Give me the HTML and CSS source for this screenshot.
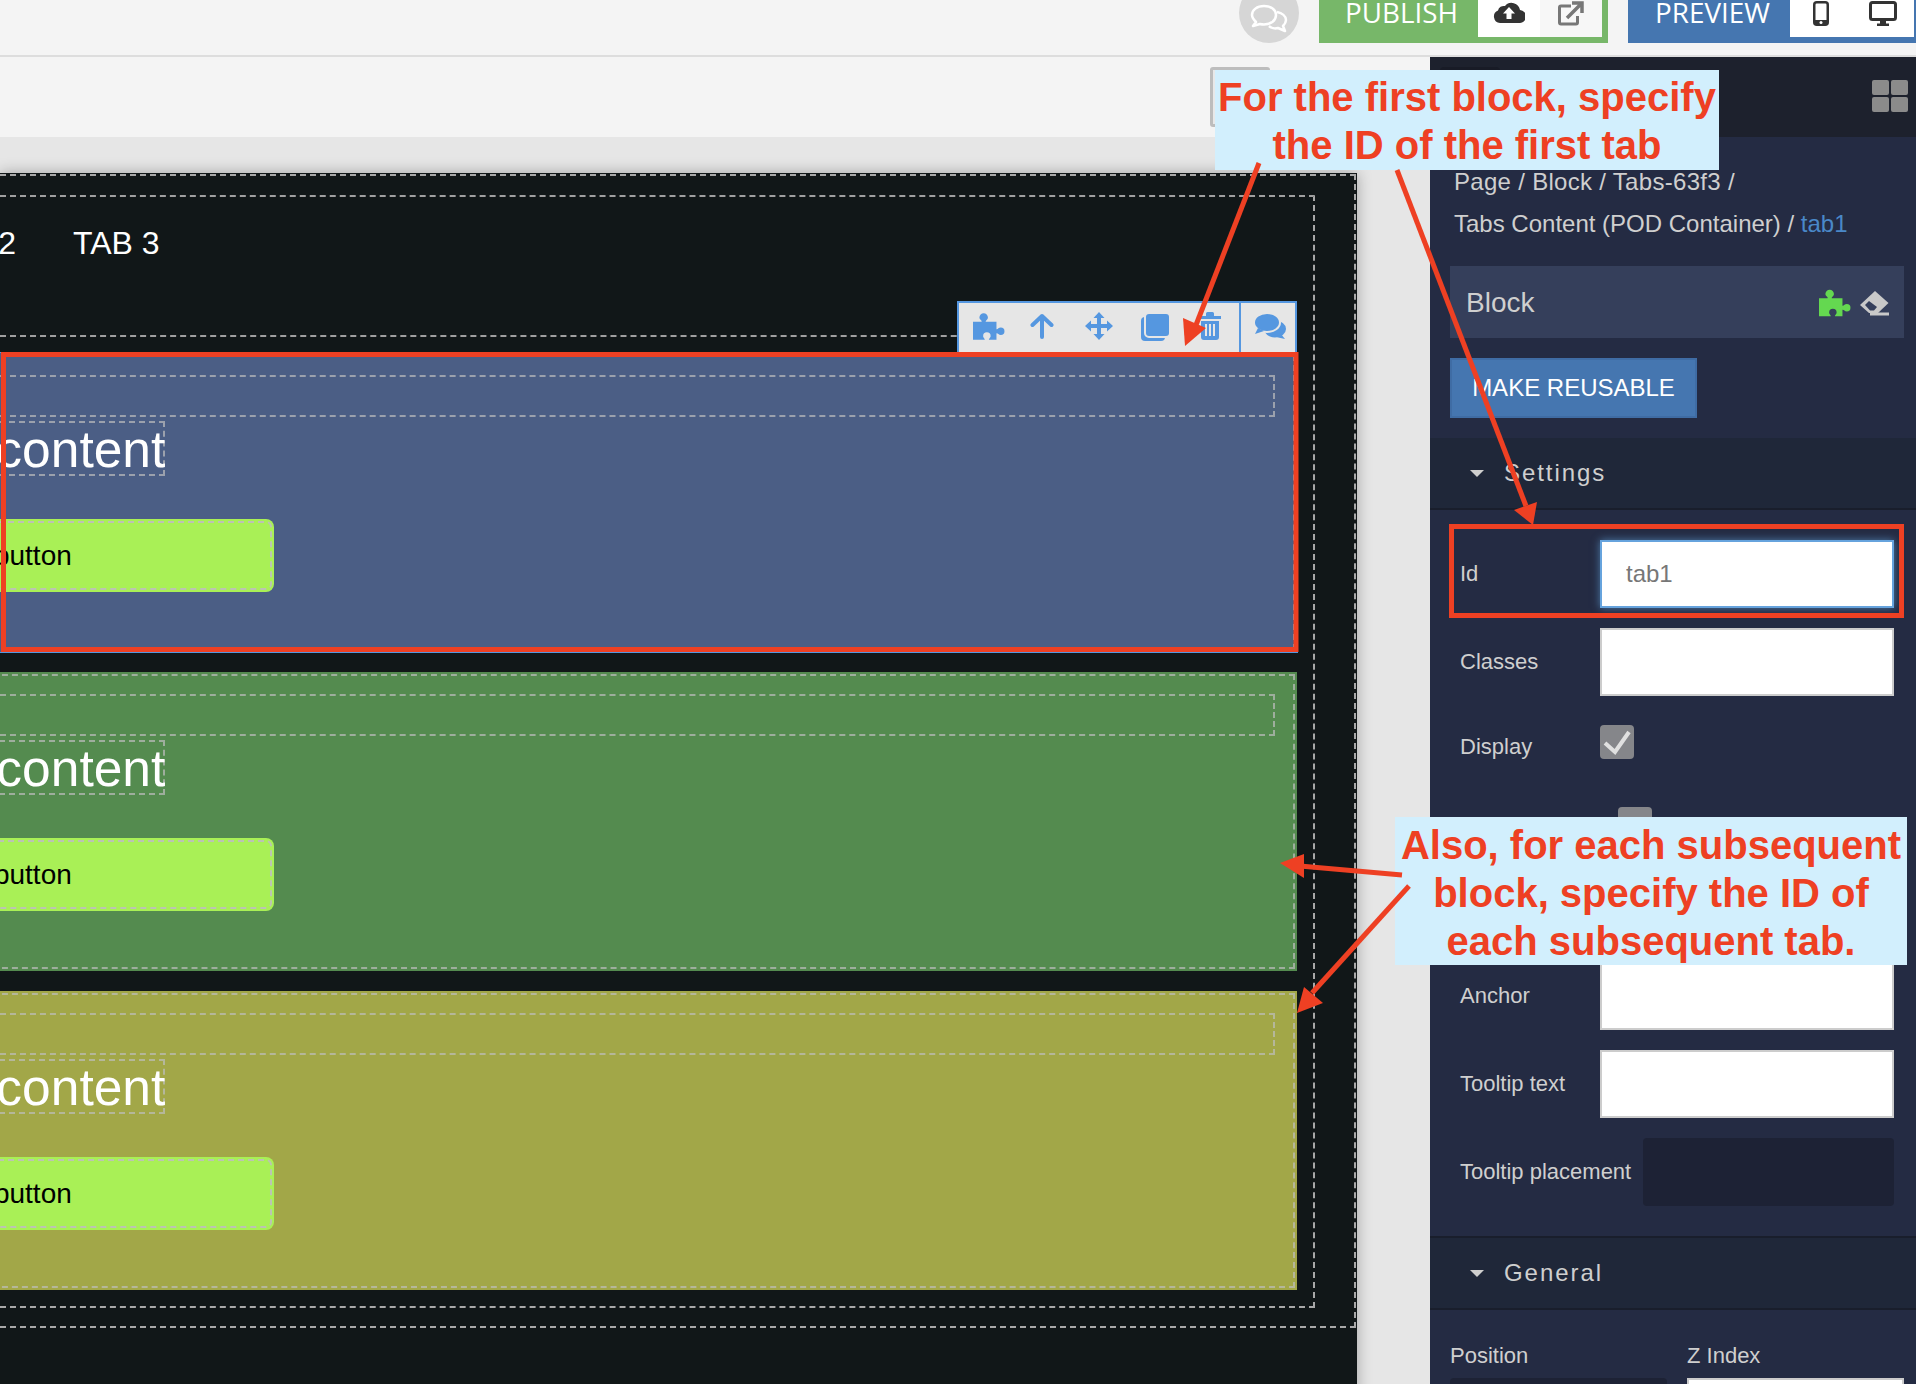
FILE: index.html
```html
<!DOCTYPE html>
<html lang="en">
<head>
    <meta charset="UTF-8">
    <meta name="viewport" content="width=device-width, initial-scale=1.0">
    <title>Page Editor</title>
    <link rel="stylesheet" href="styles.css">
</head>
<body>

    <!-- Top bar, scrolled so its top edge is cut off -->
    <header class="topbar">
        <div class="chat-circle">
            <svg width="38" height="30" viewBox="0 0 38 30" fill="none" stroke="#fff" stroke-width="2.5" stroke-linejoin="round">
                <path d="M14 2c-7 0-12 4-12 9 0 3 2 5 4 7l-3 4 7-2c2 .5 3 .5 4 .5 7 0 12-4 12-9.500S21 2 14 2z"/>
                <path d="M27 8c5 1 9 4 9 8 0 2-1 4-3 6l2 5-7-3c-3 1-7 0-9-2"/>
            </svg>
        </div>
        <div class="top-btn green">
            <span class="top-label">PUBLISH</span>
            <div class="top-icons">
                <div class="top-icon">
                    <svg width="32" height="22" viewBox="0 0 32 22">
                        <path fill="#333" d="M7 22A6.500 6.500 0 0 1 5 9.500 6 6 0 0 1 12 5 8.500 8.500 0 0 1 27 9a6.500 6.500 0 0 1-1 13z"/>
                        <path fill="#fff" d="M16 6l6 6.500h-3.500V18h-5v-5.500H10z"/>
                    </svg>
                </div>
                <div class="top-icon alt">
                    <svg width="26" height="25" viewBox="0 0 26 25" fill="none" stroke="#777" stroke-width="3">
                        <path d="M13 5H3a1.500 1.500 0 0 0-1.500 1.500v15A1.500 1.500 0 0 0 3 23h15a1.500 1.500 0 0 0 1.500-1.500V15"/>
                        <path d="M9 17L23 3M14 2h10v10" stroke-width="3.500"/>
                    </svg>
                </div>
            </div>
        </div>
        <div class="top-btn blue">
            <span class="top-label">PREVIEW</span>
            <div class="top-icons">
                <div class="top-icon">
                    <svg width="16" height="25" viewBox="0 0 16 25">
                        <rect x="1.250" y="1.250" width="13.500" height="22.500" rx="2.500" fill="none" stroke="#333" stroke-width="2.500"/>
                        <rect x="1" y="19" width="14" height="5" fill="#333"/>
                        <circle cx="8" cy="21.500" r="1.500" fill="#fff"/>
                    </svg>
                </div>
                <div class="top-icon">
                    <svg width="28" height="25" viewBox="0 0 28 25">
                        <rect x="1.500" y="1.500" width="25" height="17" rx="2" fill="none" stroke="#333" stroke-width="3"/>
                        <path fill="#333" d="M11 20h6v2.500h3V25H8v-2.500h3z"/>
                    </svg>
                </div>
            </div>
        </div>
    </header>

    <div class="workspace">
        <main class="editor">
            <div class="subbar">
                <div class="subbar-box"></div>
            </div>

            <div class="stage">
                <div class="canvas">
                    <div class="frame-outer">
                        <div class="frame-inner">
                            <div class="tabs">
                                <span>TAB 1</span>
                                <span>TAB 2</span>
                                <span>TAB 3</span>
                            </div>
                            <div class="tab-content">

                                <section class="block blue-block">
                                    <div class="block-toolbar">
                                        <div class="tools">
                                            <svg class="tool-add" width="32" height="27" viewBox="0 0 30 25"><path fill="#5597e0" d="M0 8h8c1-1-2-2-2-4a4 4 0 0 1 8 0c0 2-2.500 3-2 4h10v7c1 .5 2-1.500 4-1.500a3.500 3.500 0 0 1 0 7c-2 0-3-2-4-1.500v6h-7c-.5-1 1.500-1.500 1.500-3.500a3.500 3.500 0 0 0-7 0c0 2 2 2.500 1.500 3.500H0z"/></svg>
                                            <svg class="tool-up" width="24" height="26" viewBox="0 0 24 26" fill="none" stroke="#5597e0" stroke-width="4" stroke-linecap="round" stroke-linejoin="round"><path d="M12 24V3M2.500 12L12 3l9.500 9"/></svg>
                                            <svg width="28" height="28" viewBox="0 0 28 28" fill="#5597e0"><path d="M14 0l5.500 6H16v6h6V8.500l6 5.500-6 5.500V16h-6v6h3.500L14 28l-5.500-6H12v-6H6v3.500L0 14l6-5.500V12h6V6H8.500z"/></svg>
                                            <svg width="30" height="29" viewBox="0 0 30 29"><rect x="0" y="5" width="24" height="24" rx="4" fill="#5597e0"/><rect x="4" y="1" width="25" height="24" rx="4" fill="#5597e0" stroke="#e6e6e6" stroke-width="2"/></svg>
                                            <svg width="22" height="28" viewBox="0 0 22 28" fill="#5597e0"><path d="M0 4h7V1.500A1.500 1.500 0 0 1 8.500 0h5A1.500 1.500 0 0 1 15 1.500V4h7v3H0z"/><path d="M2 9h18v16a3 3 0 0 1-3 3H5a3 3 0 0 1-3-3zM6 12v12h2V12zm4 0v12h2V12zm4 0v12h2V12z" fill-rule="evenodd"/></svg>
                                        </div>
                                        <div class="tool-chat">
                                            <svg width="32" height="26" viewBox="0 0 32 26"><ellipse cx="21" cy="16" rx="11" ry="8.500" fill="#5597e0"/><path d="M27 21l4 5-9-2z" fill="#5597e0"/><ellipse cx="13" cy="9.500" rx="13" ry="9.500" fill="#5597e0" stroke="#e6e6e6" stroke-width="2"/><path d="M4 15l-3 6 9-3z" fill="#5597e0"/></svg>
                                        </div>
                                    </div>
                                    <div class="block-row"></div>
                                    <h2 class="block-title">Tab content</h2>
                                    <div class="block-btn">Tab button</div>
                                </section>

                                <section class="block green-block">
                                    <div class="block-row"></div>
                                    <h2 class="block-title">Tab content</h2>
                                    <div class="block-btn">Tab button</div>
                                </section>

                                <section class="block olive-block">
                                    <div class="block-row"></div>
                                    <h2 class="block-title">Tab content</h2>
                                    <div class="block-btn">Tab button</div>
                                </section>

                            </div>
                        </div>
                    </div>
                </div>
            </div>
        </main>

        <aside class="panel">
            <div class="panel-head">
                <div class="panel-tab"></div>
                <div class="grid-icon"><i></i><i></i><i></i><i></i></div>
            </div>

            <div class="panel-top">
                <p class="crumbs">Page / Block / Tabs-63f3 /<br>Tabs Content (POD Container) / <span class="crumb-link">tab1</span></p>

                <div class="block-bar">
                    <span>Block</span>
                    <div class="block-bar-icons">
                        <svg width="32" height="28" viewBox="0 0 30 25"><path fill="#64d850" d="M0 8h8c1-1-2-2-2-4a4 4 0 0 1 8 0c0 2-2.500 3-2 4h10v7c1 .5 2-1.500 4-1.500a3.500 3.500 0 0 1 0 7c-2 0-3-2-4-1.500v6h-7c-.5-1 1.500-1.500 1.500-3.500a3.500 3.500 0 0 0-7 0c0 2 2 2.500 1.500 3.500H0z"/></svg>
                        <svg width="29" height="25" viewBox="0 0 29 25"><path fill="#c9c9c9" d="M15 0l13.500 12L18 22H9L0 14z"/><path fill="#353f5b" d="M5 14l4-4 8 6-3 3.500h-4z"/><rect x="10" y="21.500" width="19" height="3" fill="#c9c9c9"/></svg>
                    </div>
                </div>

                <button class="reusable-btn">MAKE REUSABLE</button>
            </div>

            <div class="section-head">
                <span class="caret"></span>
                <span>Settings</span>
            </div>

            <div class="fields">
                <div class="field">
                    <label>Id</label>
                    <input class="text-input focused" type="text" value="tab1">
                </div>
                <div class="field">
                    <label>Classes</label>
                    <input class="text-input" type="text">
                </div>
                <div class="field check-field">
                    <label>Display</label>
                    <div class="checkbox">
                        <svg width="34" height="34" viewBox="0 0 34 34" fill="none" stroke="#e0e0e0" stroke-width="4"><path d="M5 18l10 9L29 7"/></svg>
                    </div>
                </div>
                <div class="field second-check">
                    <div class="checkbox"></div>
                </div>
                <div class="field">
                    <label>Anchor</label>
                    <input class="text-input" type="text">
                </div>
                <div class="field">
                    <label>Tooltip text</label>
                    <input class="text-input" type="text">
                </div>
                <div class="field placement-field">
                    <label>Tooltip placement</label>
                    <div class="dark-select"></div>
                </div>
            </div>

            <div class="section-head general-head">
                <span class="caret"></span>
                <span>General</span>
            </div>

            <div class="two-col">
                <div>
                    <label>Position</label>
                    <div class="dark-select"></div>
                </div>
                <div>
                    <label>Z Index</label>
                    <input class="text-input" type="text">
                </div>
            </div>
        </aside>
    </div>

    <!-- Annotations drawn on top of the screenshot -->
    <div class="callout callout-first">For the first block, specify<br>the ID of the first tab</div>
    <div class="callout callout-next">Also, for each subsequent<br>block, specify the ID of<br>each subsequent tab.</div>
    <svg class="marks" width="1916" height="1384" viewBox="0 0 1916 1384">
        <g fill="none" stroke="#ee4023" stroke-width="5">
            <rect x="3.500" y="354.500" width="1292.500" height="295"/>
            <rect x="1451.500" y="526.500" width="450" height="89"/>
            <path d="M1259 163L1196 325"/>
            <path d="M1397 170L1526 506"/>
            <path d="M1402 875L1300 866"/>
            <path d="M1409 886L1312 993"/>
        </g>
        <g fill="#ee4023">
            <polygon points="1183,318 1206,328 1185,346"/>
            <polygon points="1514,510 1537,502 1533,525"/>
            <polygon points="1280,863 1304,854 1304,878"/>
            <polygon points="1297,1013 1304,987 1323,1003"/>
        </g>
    </svg>

</body>
</html>
```

FILE: styles.css
```css
html, body {
    margin: 0;
    padding: 0;
    width: 1916px;
    height: 1384px;
    overflow: hidden;
    background: #f4f4f4;
    font-family: "Liberation Sans", Arial, sans-serif;
}
.topbar {
    height: 55px;
    border-bottom: 2px solid #dddddd;
    background: #f4f4f4;
    display: flex;
    justify-content: flex-end;
    gap: 20px;
    overflow: hidden;
}
.chat-circle {
    width: 60px;
    height: 60px;
    margin-top: -17px;
    border-radius: 50%;
    background: #d6d6d6;
    display: flex;
    align-items: center;
    justify-content: center;
    padding-top: 12px;
    box-sizing: border-box;
}
.top-btn {
    height: 43px;
    display: flex;
    color: #fff;
}
.green {
    width: 289px;
    background: #77b769;
}
.blue {
    width: 288px;
    background: #4576b0;
}
.top-label {
    font-family: "Open Sans", sans-serif;
    font-size: 27.8px;
    line-height: 25px;
    width: 159px;
    box-sizing: border-box;
    padding-left: 6px;
    text-align: center;
}
.blue .top-label {
    width: 162px;
    padding-left: 7px;
}
.top-icons {
    display: flex;
    height: 37px;
}
.top-icon {
    width: 62px;
    background: #fff;
    display: flex;
    justify-content: center;
    padding-top: 1px;
    box-sizing: border-box;
}
.top-icon.alt {
    background: #f7f7f7;
}
.workspace {
    display: grid;
    grid-template-columns: 1430px 486px;
    height: 1327px;
}
.subbar {
    height: 80px;
    background: #f4f4f4;
    box-sizing: border-box;
    padding: 10px 160px 0 0;
    display: flex;
    justify-content: flex-end;
}
.subbar-box {
    width: 60px;
    height: 60px;
    box-sizing: border-box;
    border: 3px solid #bdbdbd;
    border-radius: 3px;
    background: #e8e8e8;
}
.stage {
    height: 1247px;
    box-sizing: border-box;
    padding-top: 36px;
    background: #e6e6e6;
    overflow: hidden;
}
.canvas {
    width: 1357px;
    height: 1300px;
    background: #111718;
    padding-top: 1px;
    box-sizing: border-box;
    box-shadow: 0 0 14px rgba(0, 0, 0, 0.3);
}
.frame-outer {
    width: 1356px;
    box-sizing: border-box;
    border-top: 2px dashed #a8a8a8;
    border-right: 2px dashed #a8a8a8;
    border-bottom: 2px dashed #a8a8a8;
    padding: 19px 39px 18px 0;
}
.frame-inner {
    border-top: 2px dashed #a0a0a0;
    border-right: 2px dashed #a8a8a8;
    border-bottom: 2px dashed #a8a8a8;
    padding-right: 16px;
}
.tabs {
    height: 138px;
    box-sizing: border-box;
    padding-top: 26px;
    margin-left: -214px;
    display: flex;
    gap: 57px;
    color: #fff;
    font-size: 32px;
    line-height: 40px;
}
.tab-content {
    border-top: 2px dashed #a0a0a0;
    padding: 16px 0;
    display: flex;
    flex-direction: column;
    gap: 20px;
}
.block {
    position: relative;
    height: 299px;
    box-sizing: border-box;
    margin-left: -20px;
    padding-top: 22px;
    outline: 2px dashed rgba(190, 190, 190, 0.7);
    outline-offset: -4px;
}
.blue-block {
    background: #4b5e85;
    box-shadow: 0 0 0 1px #5597e0;
}
.green-block {
    background: #548b4f;
}
.olive-block {
    background: #a2a748;
}
.block-toolbar {
    position: absolute;
    right: 0;
    bottom: 100%;
    width: 340px;
    height: 52px;
    box-sizing: border-box;
    background: #e6e6e6;
    border: 2px solid #5597e0;
    border-bottom: none;
    display: flex;
    justify-content: space-between;
}
.tools {
    display: flex;
    align-items: center;
    gap: 28px;
    padding: 0 0 4px 14px;
}
.tool-up {
    margin: 0 3px 0 -3px;
}
.tool-chat {
    width: 56px;
    padding: 0 0 4px 3px;
    box-sizing: border-box;
    border-left: 2px solid #5597e0;
    display: flex;
    align-items: center;
    justify-content: center;
}
.block-row {
    height: 42px;
    box-sizing: border-box;
    margin-right: 22px;
    border: 2px dashed rgba(190, 190, 190, 0.7);
}
.block-title {
    width: 266px;
    height: 55px;
    box-sizing: border-box;
    margin: 4px 0 0 -81px;
    padding-top: 1px;
    border: 2px dashed rgba(190, 190, 190, 0.7);
    color: #fff;
    font-size: 51.5px;
    font-weight: normal;
    line-height: 51px;
    text-indent: -2px;
    white-space: nowrap;
}
.block-btn {
    width: 374px;
    height: 73px;
    box-sizing: border-box;
    margin: 43px 0 0 -80px;
    padding-left: 41px;
    background: #a9f056;
    border-radius: 8px;
    outline: 2px dashed rgba(190, 190, 190, 0.9);
    outline-offset: -4px;
    color: #000;
    font-size: 28px;
    line-height: 73px;
}
.panel {
    background: #242b43;
    height: 1327px;
    overflow: hidden;
    color: #cfcfcf;
}
.panel-head {
    height: 80px;
    background: #1d212d;
    box-sizing: border-box;
    padding: 10px 8px 0 10px;
    display: flex;
    justify-content: space-between;
}
.panel-tab {
    width: 60px;
    height: 40px;
    background: #181b26;
    border-radius: 4px;
}
.grid-icon {
    width: 36px;
    height: 32px;
    margin-top: 13px;
    display: grid;
    grid-template-columns: 17px 17px;
    grid-template-rows: 15px 15px;
    gap: 2px;
}
.grid-icon i {
    background: #8b8b8b;
    border-radius: 2px;
}
.panel-top {
    padding: 24px 12px 20px 20px;
}
.crumbs {
    margin: 0 0 21px 4px;
    font-size: 24px;
    line-height: 42px;
}
.crumbs::first-line {
    letter-spacing: 0.3px;
}
.crumb-link {
    color: #4a88c8;
}
.block-bar {
    height: 72px;
    background: #353f5b;
    box-sizing: border-box;
    padding: 2px 15px 0 16px;
    display: flex;
    align-items: center;
    justify-content: space-between;
    font-size: 28px;
}
.block-bar-icons {
    display: flex;
    align-items: center;
    gap: 9px;
}
.reusable-btn {
    display: block;
    width: 247px;
    height: 60px;
    margin-top: 20px;
    padding: 0;
    background: #4576b0;
    border: 2px solid #3f6ca4;
    color: #fff;
    font-family: "Liberation Sans", Arial, sans-serif;
    font-size: 24px;
}
.section-head {
    height: 72px;
    box-sizing: border-box;
    background: #1f2739;
    border-bottom: 2px solid #191e2c;
    padding-left: 40px;
    display: flex;
    align-items: center;
    gap: 20px;
    font-size: 24px;
    letter-spacing: 1.95px;
}
.caret {
    width: 0;
    height: 0;
    border-left: 7px solid transparent;
    border-right: 7px solid transparent;
    border-top: 7px solid #cfcfcf;
}
.fields {
    padding: 30px 22px 30px 30px;
    height: 726px;
    box-sizing: border-box;
}
.field {
    display: grid;
    grid-template-columns: 140px 294px;
    align-items: center;
    margin-bottom: 20px;
    font-size: 22px;
}
.check-field {
    align-items: start;
    margin: 29px 0 38px;
    line-height: 44px;
}
.second-check {
    grid-template-columns: 158px 34px;
    margin-bottom: 121px;
}
.second-check .checkbox {
    grid-column: 2;
}
.placement-field {
    grid-template-columns: 183px 251px;
}
.text-input {
    width: 100%;
    height: 68px;
    box-sizing: border-box;
    padding: 0 24px;
    background: #fff;
    border: 2px solid #cccccc;
    color: #777;
    font-family: "Liberation Sans", Arial, sans-serif;
    font-size: 24px;
}
.text-input.focused {
    border-color: #66a3dd;
    box-shadow: 0 0 8px rgba(102, 175, 233, 0.6);
}
.checkbox {
    width: 34px;
    height: 34px;
    background: #85868a;
    border-radius: 4px;
}
.dark-select {
    height: 68px;
    background: #1d2235;
    border-radius: 4px;
}
.general-head {
    border-top: 2px solid #191e2c;
    height: 74px;
}
.two-col {
    display: grid;
    grid-template-columns: 217px 217px;
    gap: 20px;
    padding: 33px 12px 0 20px;
    font-size: 22px;
}
.two-col label {
    display: block;
    height: 35px;
    line-height: 26px;
}
.marks {
    position: absolute;
    top: 0;
    left: 0;
    pointer-events: none;
}
.callout {
    position: absolute;
    box-sizing: border-box;
    background: #d2effd;
    color: #ee4023;
    font-size: 40px;
    font-weight: bold;
    line-height: 48px;
    text-align: center;
    white-space: nowrap;
}
.callout-first {
    top: 70px;
    left: 1215px;
    width: 504px;
    height: 100px;
    padding-top: 3px;
}
.callout-next {
    top: 817px;
    left: 1395px;
    width: 512px;
    height: 148px;
    padding-top: 4px;
}
```
